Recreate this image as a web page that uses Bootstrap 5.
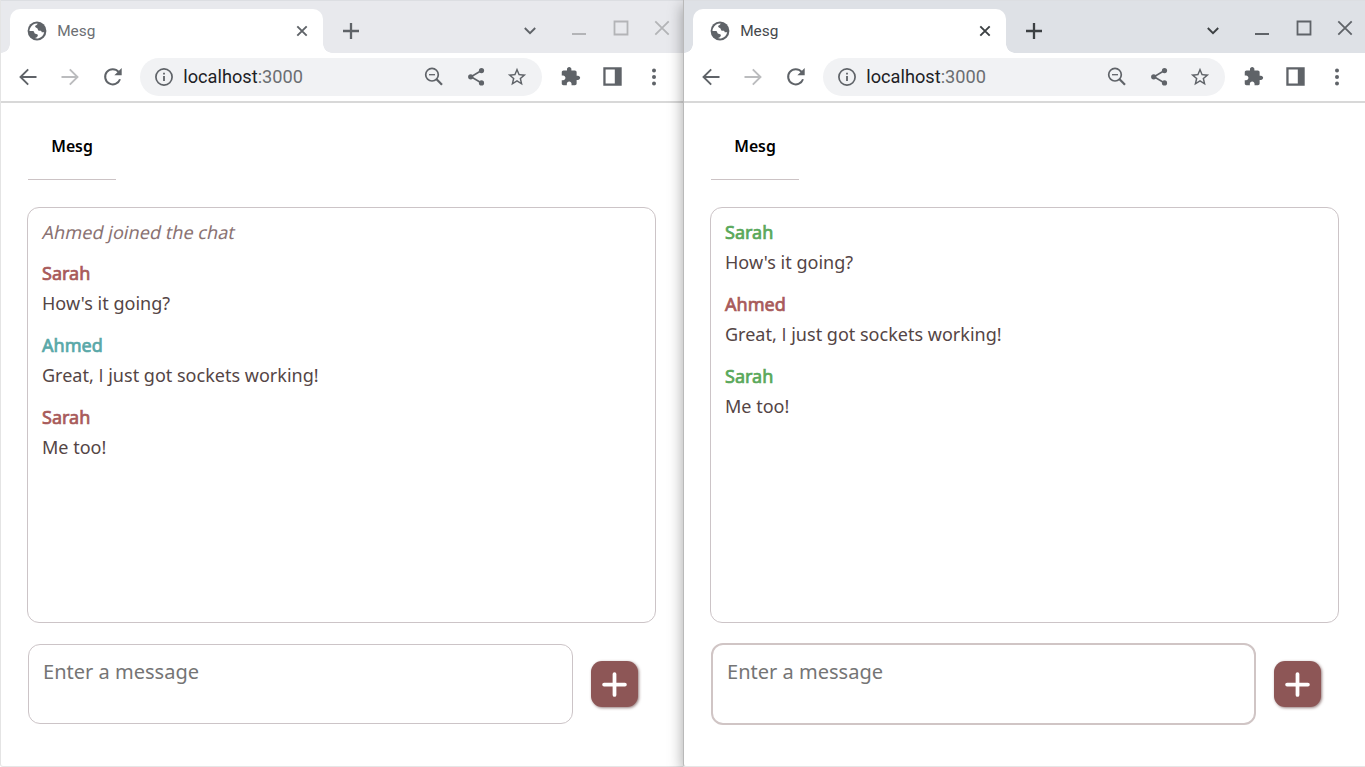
<!DOCTYPE html>
<html lang="en">
<head>
<meta charset="utf-8">
<meta name="viewport" content="width=device-width, initial-scale=1">
<title>Mesg</title>
<link href="https://cdn.jsdelivr.net/npm/bootstrap@5.3.0/dist/css/bootstrap.min.css" rel="stylesheet">
<style>
body{font-family:"Noto Sans","Open Sans",sans-serif;background:#fff}
.win{--strip:#e8e9ed;--ctl:#b3b4b7;--tabtext:#6c6f73;--tabicon:#5f6368;width:683px;border-left:1px solid #e4e4e4;border-bottom:1px solid #e6e6e6;border-radius:0 0 0 3px;background:#fff}
.win.active{--strip:#dee1e6;--ctl:#5f6368;--tabtext:#45484c;--tabicon:#3c4043;width:682px;z-index:2;border-left-color:#b9b9b9;box-shadow:0 5px 15px rgba(0,0,0,.36)}
.strip{height:53px;background:var(--strip);border-top:1px solid #dcdee2;padding:8px 0 0 9px}
.tab{width:312.5px;height:44px;background:#fff;border-radius:10px 10px 0 0;padding:0 15px 0 16px;color:var(--tabtext);font:15.4px/44px Roboto,sans-serif}
.tab::before,.tab::after{content:"";position:absolute;bottom:0;width:9px;height:9px}
.tab::before{left:-9px;background:radial-gradient(circle at 0 0,transparent 8.5px,#fff 9px)}
.tab::after{right:-9px;background:radial-gradient(circle at 100% 0,transparent 8.5px,#fff 9px)}
.favicon{margin-left:.7px;color:#5f6368}
.title{padding-left:10.5px}
.tab-x,.new-tab,.chev{color:var(--tabicon)}
.new-tab{margin-left:20.5px}
.chev{margin-right:35.5px}
.c-min{margin:0 26px 7px 0}
.c-max{margin:0 25px 7px 0}
.c-close{margin:0 5px 7px 0}
.active .c-close{margin-right:4px}
.toolbar{height:50px;border-bottom:2px solid #d8d8d8;padding-left:6px;color:#5f6368}
.cell{width:42px;flex:none;display:flex;align-items:center;justify-content:center}
.cell-n{width:41.5px;flex:none;display:flex;align-items:center;justify-content:center}
.toolbar svg{margin-bottom:1px}
.reload{margin-left:1.5px}
.omni{width:402px;height:38px;border-radius:19px;background:#f1f2f4;margin-left:7px;padding:0 4px 0 14px;font:18.2px/38px Roboto,sans-serif}
.url{margin-left:9.3px}
.host{color:#202124}.port{color:#6b6e72}
.controls{color:var(--ctl);height:44px}
.brand{width:88px;height:49px;margin:28px 0 27px 27px;border-bottom:1px solid #ccc3c5;color:#000;font-weight:600;font-size:15.8px;line-height:30px}
.chat{width:629px;height:416px;margin-left:26px;border:1px solid #ccc4c7;border-radius:12px;padding:9px 14px;color:#544545;font-size:18.02px;line-height:30px}
.entry{margin-bottom:12px}
.joined{margin-bottom:11px}
.joined span{display:inline-block;transform:skewX(-12deg);color:#8a7272;font-size:18.1px;margin-left:.5px}
.who{-webkit-text-stroke:.7px currentColor}
.red{color:#a85a5a}.teal{color:#59a8a8}.green{color:#59a85a}
.cap{font-family:"Open Sans",sans-serif}
.compose{margin:21px 0 0 27px}
.msg{width:545px;height:80px;border:1px solid #ccc4c7;border-radius:12px;padding:11px 14px;font-size:20.05px;line-height:32px;resize:none;outline:0;overflow:hidden}
.msg::placeholder{color:#757575;opacity:1}
.active .msg{height:82px;margin:-1px 0;border:2px solid #d0c5c5}
.send{width:46.5px;height:46.5px;margin-left:18px;border:0;border-radius:11px;background:#8d5656;box-shadow:1px 1px 3px rgba(80,40,40,.6);color:#fff}
</style>
</head>
<body class="overflow-hidden">
<svg class="d-none">
<symbol id="globe" viewBox="0 0 20 20"><circle cx="10" cy="10" r="9.4" fill="currentColor"/><path fill="#fff" d="M3 7.6C4.2 4.2 7.5 2.300 10.600 2.500c-.2 1.100-1 1.500-2 2.100-.8.6-.5 1.500.3 1.900 1.200.5 1.900 1.100 2 2.100.1 1.100.9 1.300 2.100 1.200 1.200-.1 1.700.5 1.700 1.500h2.500c-.5 2.800-2.700 5.500-6.200 6.100-1.200.2-2.300 0-3.100-.3 1.500-.4 2.600-1.200 2.900-2.400.2-1-.4-1.700-1.500-1.800-1.300-.1-1.900-.7-2.100-1.700-.2-.8-.9-1.100-1.900-1.100H2.500c-.1-.9.1-1.700.5-2.500z"/></symbol>
<symbol id="x" viewBox="0 0 12 12"><path d="M1.300 1.300l9.400 9.400M10.700 1.300l-9.400 9.400" stroke="currentColor" stroke-width="1.900"/></symbol>
<symbol id="plus" viewBox="0 0 16 16"><path d="M8 0v16M0 8h16" stroke="currentColor" stroke-width="2.300"/></symbol>
<symbol id="chev" viewBox="0 0 12 8"><path d="M.8 1l5.200 5.200L11.200 1" fill="none" stroke="currentColor" stroke-width="1.900"/></symbol>
<symbol id="back" viewBox="0 0 18 18"><path d="M17.500 9H2M9.200 1.300L1.500 9l7.700 7.700" fill="none" stroke="currentColor" stroke-width="1.900"/></symbol>
<symbol id="reload" viewBox="0 0 20 20"><path d="M17 12.200A7.600 7.600 0 1 1 15.600 4.900" fill="none" stroke="currentColor" stroke-width="2"/><path d="M18.700 1v7.300h-7.300z" fill="currentColor"/></symbol>
<symbol id="info" viewBox="0 0 20 20"><circle cx="10" cy="10" r="8.100" fill="none" stroke="currentColor" stroke-width="1.700"/><path d="M9.100 9h1.800v5H9.100zM9.100 5.700h1.800v1.900H9.100z" fill="currentColor"/></symbol>
<symbol id="zoomout" viewBox="0 0 20 20"><circle cx="8" cy="7.700" r="6.300" fill="none" stroke="currentColor" stroke-width="1.700"/><path d="M5 7.700h6" stroke="currentColor" stroke-width="1.300"/><path d="M12.300 12l5.700 5.800" stroke="currentColor" stroke-width="2.200"/></symbol>
<symbol id="share" viewBox="0 0 20 20"><path d="M15.500 3.500L5 9.800l10.500 6.200" fill="none" stroke="currentColor" stroke-width="1.600"/><g fill="currentColor"><circle cx="15.500" cy="3.600" r="2.600"/><circle cx="4.700" cy="9.800" r="2.600"/><circle cx="15.500" cy="15.900" r="2.600"/></g></symbol>
<symbol id="star" viewBox="0 0 24 24"><path fill="currentColor" d="M22 9.240l-7.190-.62L12 2 9.190 8.630 2 9.240l5.460 4.730L5.820 21 12 17.270 18.180 21l-1.630-7.030L22 9.240zM12 15.400l-3.760 2.270 1-4.280-3.320-2.880 4.380-.38L12 6.100l1.710 4.040 4.380.38-3.320 2.880 1 4.280L12 15.400z"/></symbol>
<symbol id="puzzle" viewBox="0 0 24 24"><path fill="currentColor" d="M20.500 11H19V7c0-1.100-.9-2-2-2h-4V3.500C13 2.120 11.880 1 10.500 1S8 2.120 8 3.500V5H4c-1.100 0-1.990.9-1.990 2v3.800H3.500c1.490 0 2.700 1.210 2.700 2.700s-1.210 2.700-2.700 2.700H2V20c0 1.100.9 2 2 2h3.800v-1.500c0-1.490 1.210-2.700 2.700-2.700 1.490 0 2.700 1.210 2.700 2.700V22H17c1.100 0 2-.9 2-2v-4h1.500c1.380 0 2.500-1.120 2.500-2.500S21.880 11 20.500 11z"/></symbol>
<symbol id="panel" viewBox="0 0 19 19"><path fill="currentColor" fill-rule="evenodd" d="M.3.300h18.400v18.400H.3zM2.600 2.600v13.800h9.200V2.600z"/></symbol>
<symbol id="dots" viewBox="0 0 6 20"><g fill="currentColor"><circle cx="3" cy="3.400" r="2"/><circle cx="3" cy="10" r="2"/><circle cx="3" cy="16.500" r="2"/></g></symbol>
<symbol id="min" viewBox="0 0 16 16"><path d="M1 14h14" stroke="currentColor" stroke-width="2"/></symbol>
<symbol id="max" viewBox="0 0 16 16"><path d="M1.500 1.500h13v13h-13z" fill="none" stroke="currentColor" stroke-width="1.800"/></symbol>
<symbol id="bigx" viewBox="0 0 16 16"><path d="M1.300 1.300l13.400 13.400M14.700 1.300L1.300 14.700" stroke="currentColor" stroke-width="1.800"/></symbol>
<symbol id="add" viewBox="0 0 24 24"><path d="M12 2v20M2 12h20" stroke="currentColor" stroke-width="3.600" stroke-linecap="round"/></symbol>
</svg>

<main class="d-flex vh-100">
<section class="win position-relative flex-shrink-0">
  <div class="strip d-flex">
    <div class="tab position-relative d-flex align-items-center"><svg class="favicon flex-shrink-0" width="20" height="20"><use href="#globe"/></svg><span class="title flex-grow-1">Mesg</span><svg class="tab-x flex-shrink-0" width="12" height="12"><use href="#x"/></svg></div>
    <div class="controls d-flex align-items-center flex-grow-1 pe-2">
      <svg class="new-tab me-auto" width="16" height="16"><use href="#plus"/></svg>
      <svg class="chev" width="12" height="8"><use href="#chev"/></svg>
      <svg class="c-min" width="16" height="16"><use href="#min"/></svg>
      <svg class="c-max" width="16" height="16"><use href="#max"/></svg>
      <svg class="c-close" width="16" height="16"><use href="#bigx"/></svg>
    </div>
  </div>
  <div class="toolbar d-flex align-items-center">
    <span class="cell"><svg width="18" height="18"><use href="#back"/></svg></span>
    <span class="cell"><svg width="18" height="18" color="#bbbcbe" transform="scale(-1 1)"><use href="#back"/></svg></span>
    <span class="cell"><svg class="reload" width="20" height="20"><use href="#reload"/></svg></span>
    <div class="omni d-flex align-items-center"><svg width="20" height="20"><use href="#info"/></svg><span class="url me-auto"><span class="host">localhost</span><span class="port">:3000</span></span>
      <span class="cell-n"><svg width="20" height="20"><use href="#zoomout"/></svg></span><span class="cell-n"><svg width="20" height="20"><use href="#share"/></svg></span><span class="cell-n"><svg width="22" height="22"><use href="#star"/></svg></span></div>
    <span class="cell-n ms-2"><svg width="21" height="21"><use href="#puzzle"/></svg></span><span class="cell-n"><svg width="19" height="19"><use href="#panel"/></svg></span><span class="cell-n"><svg width="6" height="20"><use href="#dots"/></svg></span>
  </div>
  <h1 class="brand text-center">Mesg</h1>
  <div class="chat">
    <div class="entry joined"><span>Ahmed joined the chat</span></div>
    <div class="entry"><div class="who red">Sarah</div><div>How's it going?</div></div>
    <div class="entry"><div class="who teal">Ahmed</div><div>Great, <span class="cap">I</span> just got sockets working!</div></div>
    <div class="entry"><div class="who red">Sarah</div><div>Me too!</div></div>
  </div>
  <form class="compose d-flex align-items-center"><textarea class="msg" placeholder="Enter a message"></textarea><button type="button" class="send p-0 d-flex align-items-center justify-content-center"><svg width="25" height="25"><use href="#add"/></svg></button></form>
</section>

<section class="win active position-relative flex-shrink-0">
  <div class="strip d-flex">
    <div class="tab position-relative d-flex align-items-center"><svg class="favicon flex-shrink-0" width="20" height="20"><use href="#globe"/></svg><span class="title flex-grow-1">Mesg</span><svg class="tab-x flex-shrink-0" width="12" height="12"><use href="#x"/></svg></div>
    <div class="controls d-flex align-items-center flex-grow-1 pe-2">
      <svg class="new-tab me-auto" width="16" height="16"><use href="#plus"/></svg>
      <svg class="chev" width="12" height="8"><use href="#chev"/></svg>
      <svg class="c-min" width="16" height="16"><use href="#min"/></svg>
      <svg class="c-max" width="16" height="16"><use href="#max"/></svg>
      <svg class="c-close" width="16" height="16"><use href="#bigx"/></svg>
    </div>
  </div>
  <div class="toolbar d-flex align-items-center">
    <span class="cell"><svg width="18" height="18"><use href="#back"/></svg></span>
    <span class="cell"><svg width="18" height="18" color="#bbbcbe" transform="scale(-1 1)"><use href="#back"/></svg></span>
    <span class="cell"><svg class="reload" width="20" height="20"><use href="#reload"/></svg></span>
    <div class="omni d-flex align-items-center"><svg width="20" height="20"><use href="#info"/></svg><span class="url me-auto"><span class="host">localhost</span><span class="port">:3000</span></span>
      <span class="cell-n"><svg width="20" height="20"><use href="#zoomout"/></svg></span><span class="cell-n"><svg width="20" height="20"><use href="#share"/></svg></span><span class="cell-n"><svg width="22" height="22"><use href="#star"/></svg></span></div>
    <span class="cell-n ms-2"><svg width="21" height="21"><use href="#puzzle"/></svg></span><span class="cell-n"><svg width="19" height="19"><use href="#panel"/></svg></span><span class="cell-n"><svg width="6" height="20"><use href="#dots"/></svg></span>
  </div>
  <h1 class="brand text-center">Mesg</h1>
  <div class="chat">
    <div class="entry"><div class="who green">Sarah</div><div>How's it going?</div></div>
    <div class="entry"><div class="who red">Ahmed</div><div>Great, <span class="cap">I</span> just got sockets working!</div></div>
    <div class="entry"><div class="who green">Sarah</div><div>Me too!</div></div>
  </div>
  <form class="compose d-flex align-items-center"><textarea class="msg" placeholder="Enter a message"></textarea><button type="button" class="send p-0 d-flex align-items-center justify-content-center"><svg width="25" height="25"><use href="#add"/></svg></button></form>
</section>
</main>
<script src="https://cdn.jsdelivr.net/npm/bootstrap@5.3.0/dist/js/bootstrap.bundle.min.js"></script>
</body>
</html>
